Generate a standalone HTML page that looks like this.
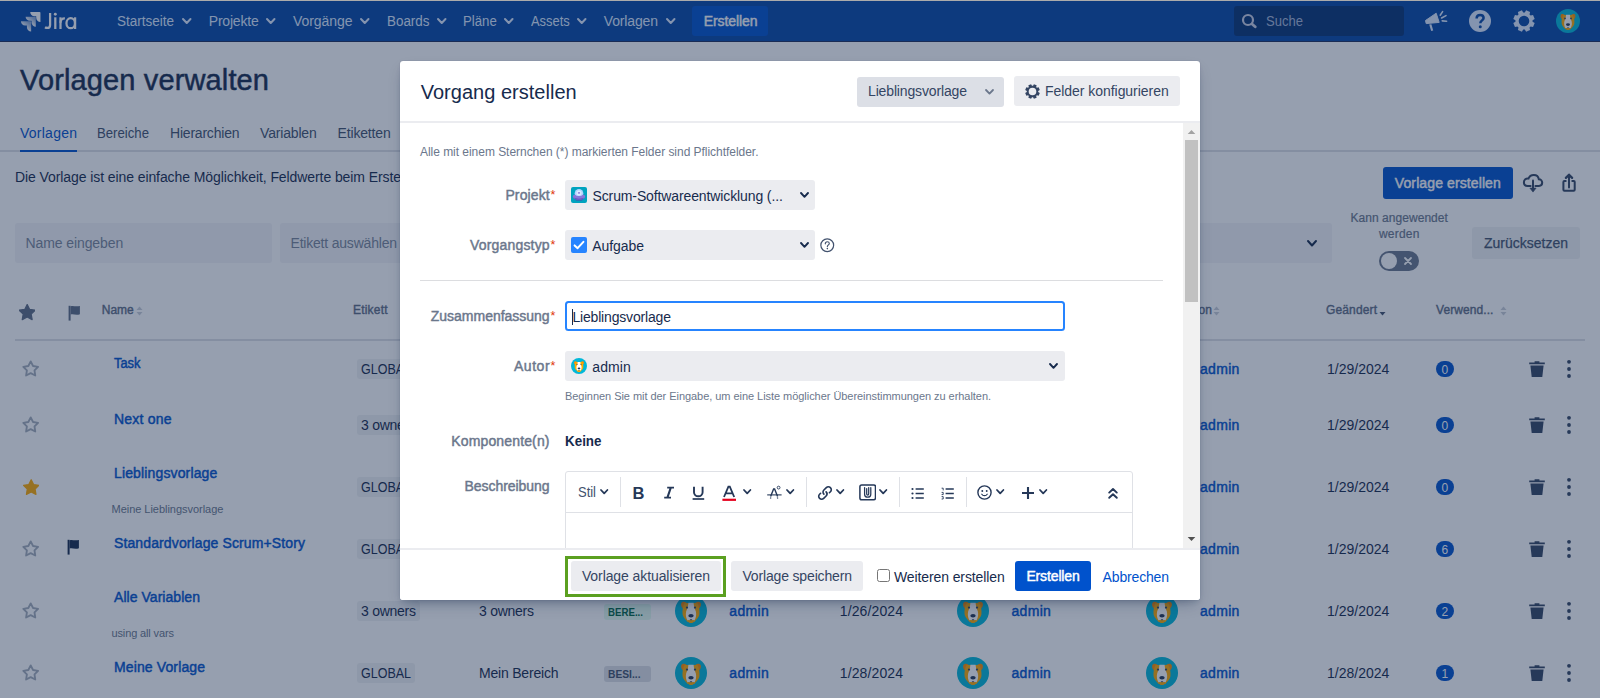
<!DOCTYPE html>
<html lang="de"><head><meta charset="utf-8"><title>Vorlagen verwalten - Jira</title>
<style>
html,body{margin:0;padding:0;}
body{width:1600px;height:698px;overflow:hidden;position:relative;background:#fff;font-family:"Liberation Sans", sans-serif;}
#pg,#bl,#md{position:absolute;left:0;top:0;width:1600px;height:698px;overflow:hidden;}
#pg div,#pg svg,#pg span,#md div,#md svg,#md span{position:absolute;display:block;box-sizing:border-box;}
.t{white-space:nowrap;}
#bl{background:rgba(23,43,77,0.45);}
</style></head>
<body>
<div id="pg">
<div style="left:0px;top:1px;width:1600px;height:40px;background:#0747A6;border-radius:0px;"></div>
<div style="left:0px;top:41px;width:1600px;height:1px;background:#1E2F5C;border-radius:0px;"></div>
<svg style="left:18.8px;top:9.75px;" width="23.4" height="23.4" viewBox="0 0 24 24"><defs><linearGradient id="jg" x1="0.9" y1="0.1" x2="0.4" y2="0.7"><stop offset="0.15" stop-color="#fff" stop-opacity="0.55"/><stop offset="1" stop-color="#fff"/></linearGradient></defs><path fill="#fff" d="M11.53 2c0 2.4 1.97 4.35 4.35 4.35h1.78v1.7c0 2.4 1.94 4.34 4.34 4.35V2.84a.84.84 0 0 0-.84-.84h-9.63z"/><path fill="url(#jg)" d="M6.77 6.8a4.362 4.362 0 0 0 4.34 4.34h1.8v1.72a4.362 4.362 0 0 0 4.34 4.34V7.63a.841.841 0 0 0-.83-.83H6.77z"/><path fill="url(#jg)" d="M2 11.6c0 2.4 1.95 4.34 4.35 4.34h1.78v1.72c.01 2.39 1.95 4.33 4.34 4.34v-9.57a.84.84 0 0 0-.84-.84L2 11.6z"/></svg>
<svg style="left:43px;top:11px;" width="36" height="21" viewBox="43 11 36 21"><g fill="none" stroke="#fff" stroke-width="2.25"><path d="M50.1 13.1 V24.9 C50.1 27.1 48.7 27.95 47.2 27.95 C46.4 27.95 45.6 27.7 45 27.3"/><path d="M55.3 17.3 V29"/><path d="M60.5 17.3 V29"/><path d="M60.5 22.8 C60.5 19.9 62.2 18.35 64.9 18.45"/><ellipse cx="70.7" cy="23.15" rx="4.25" ry="5"/><path d="M75.1 17.3 V29"/></g><circle cx="55.3" cy="14.2" r="1.45" fill="#fff"/></svg>
<span class="t" style="left:117.00px;top:14.15px;font-size:14px;line-height:14px;color:#DEEBFF;transform:scaleX(0.9638);transform-origin:0 50%;">Startseite</span>
<svg style="left:181.25px;top:17.3px;" width="11.5" height="8" viewBox="0 0 11.5 8"><path d="M2 2 L5.75 6 L9.5 2" fill="none" stroke="#DEEBFF" stroke-width="2" stroke-linecap="round" stroke-linejoin="round"/></svg>
<span class="t" style="left:208.75px;top:14.15px;font-size:14px;line-height:14px;color:#DEEBFF;letter-spacing:-0.194px;">Projekte</span>
<svg style="left:265.25px;top:17.3px;" width="11.5" height="8" viewBox="0 0 11.5 8"><path d="M2 2 L5.75 6 L9.5 2" fill="none" stroke="#DEEBFF" stroke-width="2" stroke-linecap="round" stroke-linejoin="round"/></svg>
<span class="t" style="left:293.00px;top:14.15px;font-size:14px;line-height:14px;color:#DEEBFF;letter-spacing:-0.065px;">Vorgänge</span>
<svg style="left:359.25px;top:17.3px;" width="11.5" height="8" viewBox="0 0 11.5 8"><path d="M2 2 L5.75 6 L9.5 2" fill="none" stroke="#DEEBFF" stroke-width="2" stroke-linecap="round" stroke-linejoin="round"/></svg>
<span class="t" style="left:386.50px;top:14.15px;font-size:14px;line-height:14px;color:#DEEBFF;transform:scaleX(0.9581);transform-origin:0 50%;">Boards</span>
<svg style="left:436.0px;top:17.3px;" width="11.5" height="8" viewBox="0 0 11.5 8"><path d="M2 2 L5.75 6 L9.5 2" fill="none" stroke="#DEEBFF" stroke-width="2" stroke-linecap="round" stroke-linejoin="round"/></svg>
<span class="t" style="left:463.00px;top:14.15px;font-size:14px;line-height:14px;color:#DEEBFF;transform:scaleX(0.9424);transform-origin:0 50%;">Pläne</span>
<svg style="left:503.25px;top:17.3px;" width="11.5" height="8" viewBox="0 0 11.5 8"><path d="M2 2 L5.75 6 L9.5 2" fill="none" stroke="#DEEBFF" stroke-width="2" stroke-linecap="round" stroke-linejoin="round"/></svg>
<span class="t" style="left:530.75px;top:14.15px;font-size:14px;line-height:14px;color:#DEEBFF;transform:scaleX(0.9223);transform-origin:0 50%;">Assets</span>
<svg style="left:576.25px;top:17.3px;" width="11.5" height="8" viewBox="0 0 11.5 8"><path d="M2 2 L5.75 6 L9.5 2" fill="none" stroke="#DEEBFF" stroke-width="2" stroke-linecap="round" stroke-linejoin="round"/></svg>
<span class="t" style="left:603.75px;top:14.15px;font-size:14px;line-height:14px;color:#DEEBFF;letter-spacing:-0.147px;">Vorlagen</span>
<svg style="left:665.25px;top:17.3px;" width="11.5" height="8" viewBox="0 0 11.5 8"><path d="M2 2 L5.75 6 L9.5 2" fill="none" stroke="#DEEBFF" stroke-width="2" stroke-linecap="round" stroke-linejoin="round"/></svg>
<div style="left:692px;top:6px;width:76px;height:30px;background:#0052CC;border-radius:3px;"></div>
<span class="t" style="left:703.75px;top:14.15px;font-size:14px;line-height:14px;color:#FFFFFF;-webkit-text-stroke:0.45px #FFFFFF;letter-spacing:-0.090px;">Erstellen</span>
<div style="left:1234px;top:6px;width:170px;height:30px;background:rgba(9,30,66,0.48);border-radius:3px;"></div>
<svg style="left:1241px;top:13px;" width="16" height="16" viewBox="0 0 16 16"><circle cx="7" cy="7" r="5" fill="none" stroke="#CBD0E4" stroke-width="2.2"/><path d="M11 11 L14.2 13.8" stroke="#CBD0E4" stroke-width="2.8" stroke-linecap="round"/></svg>
<span class="t" style="left:1266.00px;top:14.45px;font-size:14px;line-height:14px;color:#A6B7D6;transform:scaleX(0.9319);transform-origin:0 50%;">Suche</span>
<svg style="left:1424px;top:10px;" width="24" height="22" viewBox="0 0 24 22"><path d="M1.5 10.5 L12.2 3.2 L15.2 12.4 L2.2 13.6Z" fill="#DEEBFF" stroke="#DEEBFF" stroke-width="1" stroke-linejoin="round"/><path d="M5.2 14.6 L7.4 14.2 L9.2 20.4 L7.2 20.9Z" fill="#DEEBFF"/><path d="M16.2 5.2 L18.6 1.6 M17.6 8 L22 5.6 M18.2 10.9 L22.6 11.3" stroke="#DEEBFF" stroke-width="1.6" stroke-linecap="round"/></svg>
<svg style="left:1469px;top:10px;" width="22" height="22" viewBox="0 0 22 22"><circle cx="11" cy="11" r="11" fill="#DEEBFF"/><path d="M7.6 8.6 C7.6 6.2 9.2 5 11.1 5 C13.1 5 14.6 6.2 14.6 8 C14.6 10.3 11.4 10.5 11.3 13.2" fill="none" stroke="#0747A6" stroke-width="2.5" stroke-linecap="butt"/><circle cx="11.25" cy="16.8" r="1.5" fill="#0747A6"/></svg>
<svg style="left:1513px;top:10px;" width="22" height="22" viewBox="0 0 22 22"><path fill-rule="evenodd" fill="#DEEBFF" d="M19.56 11.80 L21.70 13.09 L20.04 17.09 L17.62 16.49 L16.49 17.62 L17.09 20.04 L13.09 21.70 L11.80 19.56 L10.20 19.56 L8.91 21.70 L4.91 20.04 L5.51 17.62 L4.38 16.49 L1.96 17.09 L0.30 13.09 L2.44 11.80 L2.44 10.20 L0.30 8.91 L1.96 4.91 L4.38 5.51 L5.51 4.38 L4.91 1.96 L8.91 0.30 L10.20 2.44 L11.80 2.44 L13.09 0.30 L17.09 1.96 L16.49 4.38 L17.62 5.51 L20.04 4.91 L21.70 8.91 L19.56 10.20Z M16.3 11 A5.3 5.3 0 1 0 5.7 11 A5.3 5.3 0 1 0 16.3 11Z"/></svg>
<svg style="left:1556.0px;top:9.0px;" width="24" height="24" viewBox="0 0 32 32"><circle cx="16" cy="16" r="16" fill="#00B8D9"/>
<path d="M6.2 8.6 C6.6 6.6 9.2 6.2 11.2 7.4 L12.4 11.2 L8.2 13.4 C6.4 12.4 5.8 10.4 6.2 8.6Z" fill="#FF8B00"/>
<path d="M25.8 8.6 C25.4 6.6 22.8 6.2 20.8 7.4 L19.6 11.2 L23.8 13.4 C25.6 12.4 26.2 10.4 25.8 8.6Z" fill="#FF8B00"/>
<path d="M9.6 8 H22.4 C24.2 11 24.8 15.5 24.4 19.5 C24 22.5 21 24.6 19.4 27 H12.6 C11 24.6 8 22.5 7.6 19.5 C7.2 15.5 7.8 11 9.6 8Z" fill="#FFAB00"/>
<path d="M13.4 7.8 H18.6 C18.9 11 19.4 13.2 20.8 16.2 C21.6 19.4 21 22.6 19.6 25.2 H12.4 C11 22.6 10.4 19.4 11.2 16.2 C12.6 13.2 13.1 11 13.4 7.8Z" fill="#FFFFFF"/>
<path d="M12.8 25.2 H19.2 L18.2 27.4 C17 28.3 15 28.3 13.8 27.4Z" fill="#FFAB00"/>
<circle cx="12" cy="12.6" r="1.15" fill="#344563"/><circle cx="20" cy="12.6" r="1.15" fill="#344563"/>
<ellipse cx="16" cy="20.8" rx="2.7" ry="1.8" fill="#253858"/>
<path d="M14.6 24.2 H17.4 L16 25.6Z" fill="#253858"/></svg>
<span class="t" style="left:20.00px;top:66.05px;font-size:29px;line-height:29px;color:#172B4D;-webkit-text-stroke:0.49px #172B4D;letter-spacing:0.138px;">Vorlagen verwalten</span>
<span class="t" style="left:20.00px;top:125.65px;font-size:14px;line-height:14px;color:#0052CC;letter-spacing:0.246px;">Vorlagen</span>
<span class="t" style="left:97.00px;top:125.65px;font-size:14px;line-height:14px;color:#42526E;transform:scaleX(0.9409);transform-origin:0 50%;">Bereiche</span>
<span class="t" style="left:170.00px;top:125.65px;font-size:14px;line-height:14px;color:#42526E;letter-spacing:-0.209px;">Hierarchien</span>
<span class="t" style="left:260.00px;top:125.65px;font-size:14px;line-height:14px;color:#42526E;letter-spacing:-0.172px;">Variablen</span>
<span class="t" style="left:337.50px;top:125.65px;font-size:14px;line-height:14px;color:#42526E;letter-spacing:-0.154px;">Etiketten</span>
<div style="left:0px;top:150px;width:1600px;height:2px;background:#DFE1E6;border-radius:0px;"></div>
<div style="left:20px;top:149.5px;width:57px;height:2.5px;background:#0052CC;border-radius:0px;"></div>
<span class="t" style="left:15.00px;top:170.15px;font-size:14px;line-height:14px;color:#172B4D;letter-spacing:-0.087px;">Die Vorlage ist eine einfache Möglichkeit, Feldwerte beim Erste</span>
<div style="left:1383px;top:167px;width:130px;height:32px;background:#0052CC;border-radius:3px;"></div>
<span class="t" style="left:1394.80px;top:176.15px;font-size:14px;line-height:14px;color:#FFFFFF;-webkit-text-stroke:0.45px #FFFFFF;letter-spacing:0.106px;">Vorlage erstellen</span>
<svg style="left:1520px;top:170px;" width="26" height="24" viewBox="1520 170 26 24"><path d="M1530.6 185.9 H1527.6 C1525 185.9 1523.9 183.9 1523.9 182.2 C1523.9 179.7 1526 178 1528.5 178.5 C1529.3 176.2 1531.4 174.9 1533.8 174.9 C1536.6 174.9 1538.5 176.8 1538.8 179.2 C1541 179.2 1542.2 181 1542.2 182.6 C1542.2 184.6 1540.8 185.9 1539 185.9 H1535.4" fill="none" stroke="#344563" stroke-width="2" stroke-linecap="round"/><path d="M1533 180.6 V188.8" stroke="#344563" stroke-width="2" stroke-linecap="round"/><path d="M1529.9 188.1 H1536.1 L1533 192.1Z" fill="#344563" stroke="#344563" stroke-width="0.6" stroke-linejoin="round"/></svg>
<svg style="left:1558px;top:170px;" width="22" height="24" viewBox="1558 170 22 24"><path d="M1565.7 181 H1564.4 C1563.8 181 1563.4 181.4 1563.4 182 V189.8 C1563.4 190.4 1563.8 190.8 1564.4 190.8 H1573.7 C1574.3 190.8 1574.7 190.4 1574.7 189.8 V182 C1574.7 181.4 1574.3 181 1573.7 181 H1572.3" fill="none" stroke="#344563" stroke-width="2" stroke-linecap="round"/><path d="M1569 175.4 V187.4" stroke="#344563" stroke-width="2" stroke-linecap="round"/><path d="M1565.9 177.9 L1569 174.7 L1572.1 177.9" fill="none" stroke="#344563" stroke-width="2.3" stroke-linecap="round" stroke-linejoin="round"/></svg>
<div style="left:15px;top:223px;width:257px;height:40px;background:#F4F5F7;border-radius:3px;"></div>
<span class="t" style="left:25.50px;top:235.65px;font-size:14px;line-height:14px;color:#7A869A;letter-spacing:-0.097px;">Name eingeben</span>
<div style="left:280px;top:223px;width:257px;height:40px;background:#F4F5F7;border-radius:3px;"></div>
<span class="t" style="left:290.50px;top:235.65px;font-size:14px;line-height:14px;color:#7A869A;letter-spacing:-0.202px;">Etikett auswählen</span>
<div style="left:1075px;top:223px;width:257px;height:40px;background:#F4F5F7;border-radius:3px;"></div>
<svg style="left:1305.7px;top:239.05px;" width="12" height="8.5" viewBox="0 0 12 8.5"><path d="M2 2 L6.0 6.5 L10 2" fill="none" stroke="#172B4D" stroke-width="2" stroke-linecap="round" stroke-linejoin="round"/></svg>
<span class="t" style="left:1350.40px;top:212.34px;font-size:12px;line-height:12px;color:#6B778C;-webkit-text-stroke:0.20px #6B778C;letter-spacing:0.054px;">Kann angewendet</span>
<span class="t" style="left:1379.00px;top:228.34px;font-size:12px;line-height:12px;color:#6B778C;-webkit-text-stroke:0.20px #6B778C;letter-spacing:0.208px;">werden</span>
<div style="left:1379px;top:251px;width:40px;height:20px;background:#6B778C;border-radius:10px;"></div>
<div style="left:1381px;top:253px;width:16px;height:16px;background:#FFFFFF;border-radius:8px;"></div>
<svg style="left:1403px;top:256px;" width="10" height="10" viewBox="0 0 10 10"><path d="M2 2 L8 8 M8 2 L2 8" stroke="#fff" stroke-width="1.8" stroke-linecap="round"/></svg>
<div style="left:1472px;top:227px;width:108px;height:32px;background:rgba(9,30,66,0.06);border-radius:3px;"></div>
<span class="t" style="left:1483.70px;top:235.93px;font-size:14.5px;line-height:14.5px;color:#42526E;-webkit-text-stroke:0.25px #42526E;transform:scaleX(0.9650);transform-origin:0 50%;">Zurücksetzen</span>
<svg style="left:18.8px;top:304.4px;" width="16.4" height="16.4" viewBox="0 0 16 16"><path d="M8.00 0.40 L10.41 5.28 L15.80 6.07 L11.90 9.87 L12.82 15.23 L8.00 12.70 L3.18 15.23 L4.10 9.87 L0.20 6.07 L5.59 5.28Z" fill="#5E6C84" stroke="#5E6C84" stroke-width="1.2" stroke-linejoin="round"/></svg>
<svg style="left:67.5px;top:304.5px;" width="13" height="16" viewBox="0 0 13 16"><path d="M0.6 0.8 H2.6 V15.6 H0.6Z" fill="#5E6C84"/><path d="M2.6 1.4 C5 0.2 7.4 2.2 11.9 0.9 V9.2 C7.6 10.6 5 8.4 2.6 9.6Z" fill="#5E6C84"/></svg>
<span class="t" style="left:101.80px;top:303.54px;font-size:12px;line-height:12px;color:#5E6C84;-webkit-text-stroke:0.38px #5E6C84;letter-spacing:-0.039px;">Name</span>
<svg style="left:136px;top:305.5px;" width="7" height="10" viewBox="0 0 7 10"><path d="M3.5 0.5 L6.5 4 H0.5Z" fill="#C9CED8"/><path d="M3.5 9.5 L6.5 6 H0.5Z" fill="#C9CED8"/></svg>
<span class="t" style="left:353.00px;top:303.54px;font-size:12px;line-height:12px;color:#5E6C84;-webkit-text-stroke:0.38px #5E6C84;letter-spacing:0.190px;">Etikett</span>
<span class="t" style="left:1198.60px;top:303.54px;font-size:12px;line-height:12px;color:#5E6C84;-webkit-text-stroke:0.38px #5E6C84;">on</span>
<svg style="left:1213px;top:305.5px;" width="7" height="10" viewBox="0 0 7 10"><path d="M3.5 0.5 L6.5 4 H0.5Z" fill="#C9CED8"/><path d="M3.5 9.5 L6.5 6 H0.5Z" fill="#C9CED8"/></svg>
<span class="t" style="left:1326.00px;top:303.54px;font-size:12px;line-height:12px;color:#5E6C84;-webkit-text-stroke:0.38px #5E6C84;letter-spacing:0.136px;">Geändert</span>
<svg style="left:1379px;top:305.5px;" width="7" height="10" viewBox="0 0 7 10"><path d="M3.5 0.5 L6.5 4 H0.5Z" fill="transparent"/><path d="M3.5 9.5 L6.5 6 H0.5Z" fill="#42526E"/></svg>
<span class="t" style="left:1436.00px;top:303.54px;font-size:12px;line-height:12px;color:#5E6C84;-webkit-text-stroke:0.38px #5E6C84;letter-spacing:0.077px;">Verwend...</span>
<svg style="left:1500px;top:305.5px;" width="7" height="10" viewBox="0 0 7 10"><path d="M3.5 0.5 L6.5 4 H0.5Z" fill="#C9CED8"/><path d="M3.5 9.5 L6.5 6 H0.5Z" fill="#C9CED8"/></svg>
<div style="left:15px;top:339px;width:1570px;height:2px;background:#DFE1E6;border-radius:0px;"></div>
<svg style="left:22.3px;top:360.4px;" width="17.4" height="17.4" viewBox="0 0 17 17"><path d="M8.50 1.40 L10.79 5.84 L15.73 6.65 L12.21 10.21 L12.97 15.15 L8.50 12.90 L4.03 15.15 L4.79 10.21 L1.27 6.65 L6.21 5.84Z" fill="none" stroke="#A5ADBA" stroke-width="1.8" stroke-linejoin="round"/></svg>
<span class="t" style="left:114.00px;top:356.15px;font-size:14px;line-height:14px;color:#0052CC;-webkit-text-stroke:0.45px #0052CC;transform:scaleX(0.9202);transform-origin:0 50%;">Task</span>
<div style="left:357px;top:359.3px;width:57.80000000000001px;height:19.30000000000001px;background:rgba(9,30,66,0.06);border-radius:3px;"></div>
<span class="t" style="left:361.00px;top:361.75px;font-size:14px;line-height:14px;color:#172B4D;transform:scaleX(0.8924);transform-origin:0 50%;">GLOBAL</span>
<svg style="left:675.0px;top:353.0px;" width="32" height="32" viewBox="0 0 32 32"><circle cx="16" cy="16" r="16" fill="#00B8D9"/>
<path d="M6.2 8.6 C6.6 6.6 9.2 6.2 11.2 7.4 L12.4 11.2 L8.2 13.4 C6.4 12.4 5.8 10.4 6.2 8.6Z" fill="#FF8B00"/>
<path d="M25.8 8.6 C25.4 6.6 22.8 6.2 20.8 7.4 L19.6 11.2 L23.8 13.4 C25.6 12.4 26.2 10.4 25.8 8.6Z" fill="#FF8B00"/>
<path d="M9.6 8 H22.4 C24.2 11 24.8 15.5 24.4 19.5 C24 22.5 21 24.6 19.4 27 H12.6 C11 24.6 8 22.5 7.6 19.5 C7.2 15.5 7.8 11 9.6 8Z" fill="#FFAB00"/>
<path d="M13.4 7.8 H18.6 C18.9 11 19.4 13.2 20.8 16.2 C21.6 19.4 21 22.6 19.6 25.2 H12.4 C11 22.6 10.4 19.4 11.2 16.2 C12.6 13.2 13.1 11 13.4 7.8Z" fill="#FFFFFF"/>
<path d="M12.8 25.2 H19.2 L18.2 27.4 C17 28.3 15 28.3 13.8 27.4Z" fill="#FFAB00"/>
<circle cx="12" cy="12.6" r="1.15" fill="#344563"/><circle cx="20" cy="12.6" r="1.15" fill="#344563"/>
<ellipse cx="16" cy="20.8" rx="2.7" ry="1.8" fill="#253858"/>
<path d="M14.6 24.2 H17.4 L16 25.6Z" fill="#253858"/></svg>
<span class="t" style="left:729.30px;top:362.15px;font-size:14px;line-height:14px;color:#0052CC;-webkit-text-stroke:0.45px #0052CC;letter-spacing:0.315px;">admin</span>
<svg style="left:957.0px;top:353.0px;" width="32" height="32" viewBox="0 0 32 32"><circle cx="16" cy="16" r="16" fill="#00B8D9"/>
<path d="M6.2 8.6 C6.6 6.6 9.2 6.2 11.2 7.4 L12.4 11.2 L8.2 13.4 C6.4 12.4 5.8 10.4 6.2 8.6Z" fill="#FF8B00"/>
<path d="M25.8 8.6 C25.4 6.6 22.8 6.2 20.8 7.4 L19.6 11.2 L23.8 13.4 C25.6 12.4 26.2 10.4 25.8 8.6Z" fill="#FF8B00"/>
<path d="M9.6 8 H22.4 C24.2 11 24.8 15.5 24.4 19.5 C24 22.5 21 24.6 19.4 27 H12.6 C11 24.6 8 22.5 7.6 19.5 C7.2 15.5 7.8 11 9.6 8Z" fill="#FFAB00"/>
<path d="M13.4 7.8 H18.6 C18.9 11 19.4 13.2 20.8 16.2 C21.6 19.4 21 22.6 19.6 25.2 H12.4 C11 22.6 10.4 19.4 11.2 16.2 C12.6 13.2 13.1 11 13.4 7.8Z" fill="#FFFFFF"/>
<path d="M12.8 25.2 H19.2 L18.2 27.4 C17 28.3 15 28.3 13.8 27.4Z" fill="#FFAB00"/>
<circle cx="12" cy="12.6" r="1.15" fill="#344563"/><circle cx="20" cy="12.6" r="1.15" fill="#344563"/>
<ellipse cx="16" cy="20.8" rx="2.7" ry="1.8" fill="#253858"/>
<path d="M14.6 24.2 H17.4 L16 25.6Z" fill="#253858"/></svg>
<span class="t" style="left:1011.50px;top:362.15px;font-size:14px;line-height:14px;color:#0052CC;-webkit-text-stroke:0.45px #0052CC;letter-spacing:0.315px;">admin</span>
<svg style="left:1146.0px;top:353.0px;" width="32" height="32" viewBox="0 0 32 32"><circle cx="16" cy="16" r="16" fill="#00B8D9"/>
<path d="M6.2 8.6 C6.6 6.6 9.2 6.2 11.2 7.4 L12.4 11.2 L8.2 13.4 C6.4 12.4 5.8 10.4 6.2 8.6Z" fill="#FF8B00"/>
<path d="M25.8 8.6 C25.4 6.6 22.8 6.2 20.8 7.4 L19.6 11.2 L23.8 13.4 C25.6 12.4 26.2 10.4 25.8 8.6Z" fill="#FF8B00"/>
<path d="M9.6 8 H22.4 C24.2 11 24.8 15.5 24.4 19.5 C24 22.5 21 24.6 19.4 27 H12.6 C11 24.6 8 22.5 7.6 19.5 C7.2 15.5 7.8 11 9.6 8Z" fill="#FFAB00"/>
<path d="M13.4 7.8 H18.6 C18.9 11 19.4 13.2 20.8 16.2 C21.6 19.4 21 22.6 19.6 25.2 H12.4 C11 22.6 10.4 19.4 11.2 16.2 C12.6 13.2 13.1 11 13.4 7.8Z" fill="#FFFFFF"/>
<path d="M12.8 25.2 H19.2 L18.2 27.4 C17 28.3 15 28.3 13.8 27.4Z" fill="#FFAB00"/>
<circle cx="12" cy="12.6" r="1.15" fill="#344563"/><circle cx="20" cy="12.6" r="1.15" fill="#344563"/>
<ellipse cx="16" cy="20.8" rx="2.7" ry="1.8" fill="#253858"/>
<path d="M14.6 24.2 H17.4 L16 25.6Z" fill="#253858"/></svg>
<span class="t" style="left:1200.00px;top:362.15px;font-size:14px;line-height:14px;color:#0052CC;-webkit-text-stroke:0.45px #0052CC;letter-spacing:0.315px;">admin</span>
<span class="t" style="left:839.80px;top:362.15px;font-size:14px;line-height:14px;color:#172B4D;letter-spacing:0.113px;">1/29/2024</span>
<span class="t" style="left:1327.00px;top:362.15px;font-size:14px;line-height:14px;color:#172B4D;letter-spacing:0.013px;">1/29/2024</span>
<div style="left:1436px;top:361px;width:18px;height:16px;background:#0052CC;border-radius:8px;"></div>
<span class="t" style="left:1441.60px;top:363.54px;font-size:12px;line-height:12px;color:#FFFFFF;">0</span>
<svg style="left:1529px;top:361px;" width="16" height="16" viewBox="0 0 16 16"><path d="M5.6 0.3 H10.4 V1.5 H15.8 V3.2 H0.2 V1.5 H5.6Z M1.4 4.4 H14.6 L13.3 16 H2.7Z" fill="#344563"/></svg>
<svg style="left:1566px;top:359px;" width="6" height="20" viewBox="0 0 6 20"><circle cx="3" cy="2.8" r="1.9" fill="#344563"/><circle cx="3" cy="10" r="1.9" fill="#344563"/><circle cx="3" cy="17" r="1.9" fill="#344563"/></svg>
<svg style="left:22.3px;top:416.4px;" width="17.4" height="17.4" viewBox="0 0 17 17"><path d="M8.50 1.40 L10.79 5.84 L15.73 6.65 L12.21 10.21 L12.97 15.15 L8.50 12.90 L4.03 15.15 L4.79 10.21 L1.27 6.65 L6.21 5.84Z" fill="none" stroke="#A5ADBA" stroke-width="1.8" stroke-linejoin="round"/></svg>
<span class="t" style="left:114.00px;top:412.15px;font-size:14px;line-height:14px;color:#0052CC;-webkit-text-stroke:0.45px #0052CC;letter-spacing:0.208px;">Next one</span>
<div style="left:357px;top:415.3px;width:62.60000000000002px;height:19.30000000000001px;background:rgba(9,30,66,0.06);border-radius:3px;"></div>
<span class="t" style="left:361.00px;top:417.75px;font-size:14px;line-height:14px;color:#172B4D;letter-spacing:-0.259px;">3 owners</span>
<svg style="left:675.0px;top:409.0px;" width="32" height="32" viewBox="0 0 32 32"><circle cx="16" cy="16" r="16" fill="#00B8D9"/>
<path d="M6.2 8.6 C6.6 6.6 9.2 6.2 11.2 7.4 L12.4 11.2 L8.2 13.4 C6.4 12.4 5.8 10.4 6.2 8.6Z" fill="#FF8B00"/>
<path d="M25.8 8.6 C25.4 6.6 22.8 6.2 20.8 7.4 L19.6 11.2 L23.8 13.4 C25.6 12.4 26.2 10.4 25.8 8.6Z" fill="#FF8B00"/>
<path d="M9.6 8 H22.4 C24.2 11 24.8 15.5 24.4 19.5 C24 22.5 21 24.6 19.4 27 H12.6 C11 24.6 8 22.5 7.6 19.5 C7.2 15.5 7.8 11 9.6 8Z" fill="#FFAB00"/>
<path d="M13.4 7.8 H18.6 C18.9 11 19.4 13.2 20.8 16.2 C21.6 19.4 21 22.6 19.6 25.2 H12.4 C11 22.6 10.4 19.4 11.2 16.2 C12.6 13.2 13.1 11 13.4 7.8Z" fill="#FFFFFF"/>
<path d="M12.8 25.2 H19.2 L18.2 27.4 C17 28.3 15 28.3 13.8 27.4Z" fill="#FFAB00"/>
<circle cx="12" cy="12.6" r="1.15" fill="#344563"/><circle cx="20" cy="12.6" r="1.15" fill="#344563"/>
<ellipse cx="16" cy="20.8" rx="2.7" ry="1.8" fill="#253858"/>
<path d="M14.6 24.2 H17.4 L16 25.6Z" fill="#253858"/></svg>
<span class="t" style="left:729.30px;top:418.15px;font-size:14px;line-height:14px;color:#0052CC;-webkit-text-stroke:0.45px #0052CC;letter-spacing:0.315px;">admin</span>
<svg style="left:957.0px;top:409.0px;" width="32" height="32" viewBox="0 0 32 32"><circle cx="16" cy="16" r="16" fill="#00B8D9"/>
<path d="M6.2 8.6 C6.6 6.6 9.2 6.2 11.2 7.4 L12.4 11.2 L8.2 13.4 C6.4 12.4 5.8 10.4 6.2 8.6Z" fill="#FF8B00"/>
<path d="M25.8 8.6 C25.4 6.6 22.8 6.2 20.8 7.4 L19.6 11.2 L23.8 13.4 C25.6 12.4 26.2 10.4 25.8 8.6Z" fill="#FF8B00"/>
<path d="M9.6 8 H22.4 C24.2 11 24.8 15.5 24.4 19.5 C24 22.5 21 24.6 19.4 27 H12.6 C11 24.6 8 22.5 7.6 19.5 C7.2 15.5 7.8 11 9.6 8Z" fill="#FFAB00"/>
<path d="M13.4 7.8 H18.6 C18.9 11 19.4 13.2 20.8 16.2 C21.6 19.4 21 22.6 19.6 25.2 H12.4 C11 22.6 10.4 19.4 11.2 16.2 C12.6 13.2 13.1 11 13.4 7.8Z" fill="#FFFFFF"/>
<path d="M12.8 25.2 H19.2 L18.2 27.4 C17 28.3 15 28.3 13.8 27.4Z" fill="#FFAB00"/>
<circle cx="12" cy="12.6" r="1.15" fill="#344563"/><circle cx="20" cy="12.6" r="1.15" fill="#344563"/>
<ellipse cx="16" cy="20.8" rx="2.7" ry="1.8" fill="#253858"/>
<path d="M14.6 24.2 H17.4 L16 25.6Z" fill="#253858"/></svg>
<span class="t" style="left:1011.50px;top:418.15px;font-size:14px;line-height:14px;color:#0052CC;-webkit-text-stroke:0.45px #0052CC;letter-spacing:0.315px;">admin</span>
<svg style="left:1146.0px;top:409.0px;" width="32" height="32" viewBox="0 0 32 32"><circle cx="16" cy="16" r="16" fill="#00B8D9"/>
<path d="M6.2 8.6 C6.6 6.6 9.2 6.2 11.2 7.4 L12.4 11.2 L8.2 13.4 C6.4 12.4 5.8 10.4 6.2 8.6Z" fill="#FF8B00"/>
<path d="M25.8 8.6 C25.4 6.6 22.8 6.2 20.8 7.4 L19.6 11.2 L23.8 13.4 C25.6 12.4 26.2 10.4 25.8 8.6Z" fill="#FF8B00"/>
<path d="M9.6 8 H22.4 C24.2 11 24.8 15.5 24.4 19.5 C24 22.5 21 24.6 19.4 27 H12.6 C11 24.6 8 22.5 7.6 19.5 C7.2 15.5 7.8 11 9.6 8Z" fill="#FFAB00"/>
<path d="M13.4 7.8 H18.6 C18.9 11 19.4 13.2 20.8 16.2 C21.6 19.4 21 22.6 19.6 25.2 H12.4 C11 22.6 10.4 19.4 11.2 16.2 C12.6 13.2 13.1 11 13.4 7.8Z" fill="#FFFFFF"/>
<path d="M12.8 25.2 H19.2 L18.2 27.4 C17 28.3 15 28.3 13.8 27.4Z" fill="#FFAB00"/>
<circle cx="12" cy="12.6" r="1.15" fill="#344563"/><circle cx="20" cy="12.6" r="1.15" fill="#344563"/>
<ellipse cx="16" cy="20.8" rx="2.7" ry="1.8" fill="#253858"/>
<path d="M14.6 24.2 H17.4 L16 25.6Z" fill="#253858"/></svg>
<span class="t" style="left:1200.00px;top:418.15px;font-size:14px;line-height:14px;color:#0052CC;-webkit-text-stroke:0.45px #0052CC;letter-spacing:0.315px;">admin</span>
<span class="t" style="left:839.80px;top:418.15px;font-size:14px;line-height:14px;color:#172B4D;letter-spacing:0.113px;">1/29/2024</span>
<span class="t" style="left:1327.00px;top:418.15px;font-size:14px;line-height:14px;color:#172B4D;letter-spacing:0.013px;">1/29/2024</span>
<div style="left:1436px;top:417px;width:18px;height:16px;background:#0052CC;border-radius:8px;"></div>
<span class="t" style="left:1441.60px;top:419.54px;font-size:12px;line-height:12px;color:#FFFFFF;">0</span>
<svg style="left:1529px;top:417px;" width="16" height="16" viewBox="0 0 16 16"><path d="M5.6 0.3 H10.4 V1.5 H15.8 V3.2 H0.2 V1.5 H5.6Z M1.4 4.4 H14.6 L13.3 16 H2.7Z" fill="#344563"/></svg>
<svg style="left:1566px;top:415px;" width="6" height="20" viewBox="0 0 6 20"><circle cx="3" cy="2.8" r="1.9" fill="#344563"/><circle cx="3" cy="10" r="1.9" fill="#344563"/><circle cx="3" cy="17" r="1.9" fill="#344563"/></svg>
<svg style="left:22.8px;top:478.6px;" width="16.4" height="16.4" viewBox="0 0 16 16"><path d="M8.00 0.70 L10.35 5.36 L15.51 6.16 L11.80 9.84 L12.64 14.99 L8.00 12.60 L3.36 14.99 L4.20 9.84 L0.49 6.16 L5.65 5.36Z" fill="#FFAB00" stroke="#FFAB00" stroke-width="1.2" stroke-linejoin="round"/></svg>
<span class="t" style="left:114.00px;top:466.15px;font-size:14px;line-height:14px;color:#0052CC;-webkit-text-stroke:0.45px #0052CC;letter-spacing:0.141px;">Lieblingsvorlage</span>
<span class="t" style="left:111.50px;top:503.69px;font-size:11px;line-height:11px;color:#6B778C;letter-spacing:-0.029px;">Meine Lieblingsvorlage</span>
<div style="left:357px;top:477.3px;width:57.80000000000001px;height:19.30000000000001px;background:rgba(9,30,66,0.06);border-radius:3px;"></div>
<span class="t" style="left:361.00px;top:479.75px;font-size:14px;line-height:14px;color:#172B4D;transform:scaleX(0.8924);transform-origin:0 50%;">GLOBAL</span>
<svg style="left:675.0px;top:471.0px;" width="32" height="32" viewBox="0 0 32 32"><circle cx="16" cy="16" r="16" fill="#00B8D9"/>
<path d="M6.2 8.6 C6.6 6.6 9.2 6.2 11.2 7.4 L12.4 11.2 L8.2 13.4 C6.4 12.4 5.8 10.4 6.2 8.6Z" fill="#FF8B00"/>
<path d="M25.8 8.6 C25.4 6.6 22.8 6.2 20.8 7.4 L19.6 11.2 L23.8 13.4 C25.6 12.4 26.2 10.4 25.8 8.6Z" fill="#FF8B00"/>
<path d="M9.6 8 H22.4 C24.2 11 24.8 15.5 24.4 19.5 C24 22.5 21 24.6 19.4 27 H12.6 C11 24.6 8 22.5 7.6 19.5 C7.2 15.5 7.8 11 9.6 8Z" fill="#FFAB00"/>
<path d="M13.4 7.8 H18.6 C18.9 11 19.4 13.2 20.8 16.2 C21.6 19.4 21 22.6 19.6 25.2 H12.4 C11 22.6 10.4 19.4 11.2 16.2 C12.6 13.2 13.1 11 13.4 7.8Z" fill="#FFFFFF"/>
<path d="M12.8 25.2 H19.2 L18.2 27.4 C17 28.3 15 28.3 13.8 27.4Z" fill="#FFAB00"/>
<circle cx="12" cy="12.6" r="1.15" fill="#344563"/><circle cx="20" cy="12.6" r="1.15" fill="#344563"/>
<ellipse cx="16" cy="20.8" rx="2.7" ry="1.8" fill="#253858"/>
<path d="M14.6 24.2 H17.4 L16 25.6Z" fill="#253858"/></svg>
<span class="t" style="left:729.30px;top:480.15px;font-size:14px;line-height:14px;color:#0052CC;-webkit-text-stroke:0.45px #0052CC;letter-spacing:0.315px;">admin</span>
<svg style="left:957.0px;top:471.0px;" width="32" height="32" viewBox="0 0 32 32"><circle cx="16" cy="16" r="16" fill="#00B8D9"/>
<path d="M6.2 8.6 C6.6 6.6 9.2 6.2 11.2 7.4 L12.4 11.2 L8.2 13.4 C6.4 12.4 5.8 10.4 6.2 8.6Z" fill="#FF8B00"/>
<path d="M25.8 8.6 C25.4 6.6 22.8 6.2 20.8 7.4 L19.6 11.2 L23.8 13.4 C25.6 12.4 26.2 10.4 25.8 8.6Z" fill="#FF8B00"/>
<path d="M9.6 8 H22.4 C24.2 11 24.8 15.5 24.4 19.5 C24 22.5 21 24.6 19.4 27 H12.6 C11 24.6 8 22.5 7.6 19.5 C7.2 15.5 7.8 11 9.6 8Z" fill="#FFAB00"/>
<path d="M13.4 7.8 H18.6 C18.9 11 19.4 13.2 20.8 16.2 C21.6 19.4 21 22.6 19.6 25.2 H12.4 C11 22.6 10.4 19.4 11.2 16.2 C12.6 13.2 13.1 11 13.4 7.8Z" fill="#FFFFFF"/>
<path d="M12.8 25.2 H19.2 L18.2 27.4 C17 28.3 15 28.3 13.8 27.4Z" fill="#FFAB00"/>
<circle cx="12" cy="12.6" r="1.15" fill="#344563"/><circle cx="20" cy="12.6" r="1.15" fill="#344563"/>
<ellipse cx="16" cy="20.8" rx="2.7" ry="1.8" fill="#253858"/>
<path d="M14.6 24.2 H17.4 L16 25.6Z" fill="#253858"/></svg>
<span class="t" style="left:1011.50px;top:480.15px;font-size:14px;line-height:14px;color:#0052CC;-webkit-text-stroke:0.45px #0052CC;letter-spacing:0.315px;">admin</span>
<svg style="left:1146.0px;top:471.0px;" width="32" height="32" viewBox="0 0 32 32"><circle cx="16" cy="16" r="16" fill="#00B8D9"/>
<path d="M6.2 8.6 C6.6 6.6 9.2 6.2 11.2 7.4 L12.4 11.2 L8.2 13.4 C6.4 12.4 5.8 10.4 6.2 8.6Z" fill="#FF8B00"/>
<path d="M25.8 8.6 C25.4 6.6 22.8 6.2 20.8 7.4 L19.6 11.2 L23.8 13.4 C25.6 12.4 26.2 10.4 25.8 8.6Z" fill="#FF8B00"/>
<path d="M9.6 8 H22.4 C24.2 11 24.8 15.5 24.4 19.5 C24 22.5 21 24.6 19.4 27 H12.6 C11 24.6 8 22.5 7.6 19.5 C7.2 15.5 7.8 11 9.6 8Z" fill="#FFAB00"/>
<path d="M13.4 7.8 H18.6 C18.9 11 19.4 13.2 20.8 16.2 C21.6 19.4 21 22.6 19.6 25.2 H12.4 C11 22.6 10.4 19.4 11.2 16.2 C12.6 13.2 13.1 11 13.4 7.8Z" fill="#FFFFFF"/>
<path d="M12.8 25.2 H19.2 L18.2 27.4 C17 28.3 15 28.3 13.8 27.4Z" fill="#FFAB00"/>
<circle cx="12" cy="12.6" r="1.15" fill="#344563"/><circle cx="20" cy="12.6" r="1.15" fill="#344563"/>
<ellipse cx="16" cy="20.8" rx="2.7" ry="1.8" fill="#253858"/>
<path d="M14.6 24.2 H17.4 L16 25.6Z" fill="#253858"/></svg>
<span class="t" style="left:1200.00px;top:480.15px;font-size:14px;line-height:14px;color:#0052CC;-webkit-text-stroke:0.45px #0052CC;letter-spacing:0.315px;">admin</span>
<span class="t" style="left:839.80px;top:480.15px;font-size:14px;line-height:14px;color:#172B4D;letter-spacing:0.113px;">1/29/2024</span>
<span class="t" style="left:1327.00px;top:480.15px;font-size:14px;line-height:14px;color:#172B4D;letter-spacing:0.013px;">1/29/2024</span>
<div style="left:1436px;top:479px;width:18px;height:16px;background:#0052CC;border-radius:8px;"></div>
<span class="t" style="left:1441.60px;top:481.54px;font-size:12px;line-height:12px;color:#FFFFFF;">0</span>
<svg style="left:1529px;top:479px;" width="16" height="16" viewBox="0 0 16 16"><path d="M5.6 0.3 H10.4 V1.5 H15.8 V3.2 H0.2 V1.5 H5.6Z M1.4 4.4 H14.6 L13.3 16 H2.7Z" fill="#344563"/></svg>
<svg style="left:1566px;top:477px;" width="6" height="20" viewBox="0 0 6 20"><circle cx="3" cy="2.8" r="1.9" fill="#344563"/><circle cx="3" cy="10" r="1.9" fill="#344563"/><circle cx="3" cy="17" r="1.9" fill="#344563"/></svg>
<svg style="left:22.3px;top:540.4px;" width="17.4" height="17.4" viewBox="0 0 17 17"><path d="M8.50 1.40 L10.79 5.84 L15.73 6.65 L12.21 10.21 L12.97 15.15 L8.50 12.90 L4.03 15.15 L4.79 10.21 L1.27 6.65 L6.21 5.84Z" fill="none" stroke="#A5ADBA" stroke-width="1.8" stroke-linejoin="round"/></svg>
<svg style="left:67.3px;top:538.5px;" width="13" height="16" viewBox="0 0 13 16"><path d="M0.6 0.8 H2.6 V15.6 H0.6Z" fill="#172B4D"/><path d="M2.6 1.4 C5 0.2 7.4 2.2 11.9 0.9 V9.2 C7.6 10.6 5 8.4 2.6 9.6Z" fill="#172B4D"/></svg>
<span class="t" style="left:114.00px;top:536.15px;font-size:14px;line-height:14px;color:#0052CC;-webkit-text-stroke:0.45px #0052CC;letter-spacing:0.118px;">Standardvorlage Scrum+Story</span>
<div style="left:357px;top:539.3px;width:57.80000000000001px;height:19.300000000000068px;background:rgba(9,30,66,0.06);border-radius:3px;"></div>
<span class="t" style="left:361.00px;top:541.75px;font-size:14px;line-height:14px;color:#172B4D;transform:scaleX(0.8924);transform-origin:0 50%;">GLOBAL</span>
<svg style="left:675.0px;top:533.0px;" width="32" height="32" viewBox="0 0 32 32"><circle cx="16" cy="16" r="16" fill="#00B8D9"/>
<path d="M6.2 8.6 C6.6 6.6 9.2 6.2 11.2 7.4 L12.4 11.2 L8.2 13.4 C6.4 12.4 5.8 10.4 6.2 8.6Z" fill="#FF8B00"/>
<path d="M25.8 8.6 C25.4 6.6 22.8 6.2 20.8 7.4 L19.6 11.2 L23.8 13.4 C25.6 12.4 26.2 10.4 25.8 8.6Z" fill="#FF8B00"/>
<path d="M9.6 8 H22.4 C24.2 11 24.8 15.5 24.4 19.5 C24 22.5 21 24.6 19.4 27 H12.6 C11 24.6 8 22.5 7.6 19.5 C7.2 15.5 7.8 11 9.6 8Z" fill="#FFAB00"/>
<path d="M13.4 7.8 H18.6 C18.9 11 19.4 13.2 20.8 16.2 C21.6 19.4 21 22.6 19.6 25.2 H12.4 C11 22.6 10.4 19.4 11.2 16.2 C12.6 13.2 13.1 11 13.4 7.8Z" fill="#FFFFFF"/>
<path d="M12.8 25.2 H19.2 L18.2 27.4 C17 28.3 15 28.3 13.8 27.4Z" fill="#FFAB00"/>
<circle cx="12" cy="12.6" r="1.15" fill="#344563"/><circle cx="20" cy="12.6" r="1.15" fill="#344563"/>
<ellipse cx="16" cy="20.8" rx="2.7" ry="1.8" fill="#253858"/>
<path d="M14.6 24.2 H17.4 L16 25.6Z" fill="#253858"/></svg>
<span class="t" style="left:729.30px;top:542.15px;font-size:14px;line-height:14px;color:#0052CC;-webkit-text-stroke:0.45px #0052CC;letter-spacing:0.315px;">admin</span>
<svg style="left:957.0px;top:533.0px;" width="32" height="32" viewBox="0 0 32 32"><circle cx="16" cy="16" r="16" fill="#00B8D9"/>
<path d="M6.2 8.6 C6.6 6.6 9.2 6.2 11.2 7.4 L12.4 11.2 L8.2 13.4 C6.4 12.4 5.8 10.4 6.2 8.6Z" fill="#FF8B00"/>
<path d="M25.8 8.6 C25.4 6.6 22.8 6.2 20.8 7.4 L19.6 11.2 L23.8 13.4 C25.6 12.4 26.2 10.4 25.8 8.6Z" fill="#FF8B00"/>
<path d="M9.6 8 H22.4 C24.2 11 24.8 15.5 24.4 19.5 C24 22.5 21 24.6 19.4 27 H12.6 C11 24.6 8 22.5 7.6 19.5 C7.2 15.5 7.8 11 9.6 8Z" fill="#FFAB00"/>
<path d="M13.4 7.8 H18.6 C18.9 11 19.4 13.2 20.8 16.2 C21.6 19.4 21 22.6 19.6 25.2 H12.4 C11 22.6 10.4 19.4 11.2 16.2 C12.6 13.2 13.1 11 13.4 7.8Z" fill="#FFFFFF"/>
<path d="M12.8 25.2 H19.2 L18.2 27.4 C17 28.3 15 28.3 13.8 27.4Z" fill="#FFAB00"/>
<circle cx="12" cy="12.6" r="1.15" fill="#344563"/><circle cx="20" cy="12.6" r="1.15" fill="#344563"/>
<ellipse cx="16" cy="20.8" rx="2.7" ry="1.8" fill="#253858"/>
<path d="M14.6 24.2 H17.4 L16 25.6Z" fill="#253858"/></svg>
<span class="t" style="left:1011.50px;top:542.15px;font-size:14px;line-height:14px;color:#0052CC;-webkit-text-stroke:0.45px #0052CC;letter-spacing:0.315px;">admin</span>
<svg style="left:1146.0px;top:533.0px;" width="32" height="32" viewBox="0 0 32 32"><circle cx="16" cy="16" r="16" fill="#00B8D9"/>
<path d="M6.2 8.6 C6.6 6.6 9.2 6.2 11.2 7.4 L12.4 11.2 L8.2 13.4 C6.4 12.4 5.8 10.4 6.2 8.6Z" fill="#FF8B00"/>
<path d="M25.8 8.6 C25.4 6.6 22.8 6.2 20.8 7.4 L19.6 11.2 L23.8 13.4 C25.6 12.4 26.2 10.4 25.8 8.6Z" fill="#FF8B00"/>
<path d="M9.6 8 H22.4 C24.2 11 24.8 15.5 24.4 19.5 C24 22.5 21 24.6 19.4 27 H12.6 C11 24.6 8 22.5 7.6 19.5 C7.2 15.5 7.8 11 9.6 8Z" fill="#FFAB00"/>
<path d="M13.4 7.8 H18.6 C18.9 11 19.4 13.2 20.8 16.2 C21.6 19.4 21 22.6 19.6 25.2 H12.4 C11 22.6 10.4 19.4 11.2 16.2 C12.6 13.2 13.1 11 13.4 7.8Z" fill="#FFFFFF"/>
<path d="M12.8 25.2 H19.2 L18.2 27.4 C17 28.3 15 28.3 13.8 27.4Z" fill="#FFAB00"/>
<circle cx="12" cy="12.6" r="1.15" fill="#344563"/><circle cx="20" cy="12.6" r="1.15" fill="#344563"/>
<ellipse cx="16" cy="20.8" rx="2.7" ry="1.8" fill="#253858"/>
<path d="M14.6 24.2 H17.4 L16 25.6Z" fill="#253858"/></svg>
<span class="t" style="left:1200.00px;top:542.15px;font-size:14px;line-height:14px;color:#0052CC;-webkit-text-stroke:0.45px #0052CC;letter-spacing:0.315px;">admin</span>
<span class="t" style="left:839.80px;top:542.15px;font-size:14px;line-height:14px;color:#172B4D;letter-spacing:0.113px;">1/29/2024</span>
<span class="t" style="left:1327.00px;top:542.15px;font-size:14px;line-height:14px;color:#172B4D;letter-spacing:0.013px;">1/29/2024</span>
<div style="left:1436px;top:541px;width:18px;height:16px;background:#0052CC;border-radius:8px;"></div>
<span class="t" style="left:1441.60px;top:543.54px;font-size:12px;line-height:12px;color:#FFFFFF;">6</span>
<svg style="left:1529px;top:541px;" width="16" height="16" viewBox="0 0 16 16"><path d="M5.6 0.3 H10.4 V1.5 H15.8 V3.2 H0.2 V1.5 H5.6Z M1.4 4.4 H14.6 L13.3 16 H2.7Z" fill="#344563"/></svg>
<svg style="left:1566px;top:539px;" width="6" height="20" viewBox="0 0 6 20"><circle cx="3" cy="2.8" r="1.9" fill="#344563"/><circle cx="3" cy="10" r="1.9" fill="#344563"/><circle cx="3" cy="17" r="1.9" fill="#344563"/></svg>
<svg style="left:22.3px;top:602.4px;" width="17.4" height="17.4" viewBox="0 0 17 17"><path d="M8.50 1.40 L10.79 5.84 L15.73 6.65 L12.21 10.21 L12.97 15.15 L8.50 12.90 L4.03 15.15 L4.79 10.21 L1.27 6.65 L6.21 5.84Z" fill="none" stroke="#A5ADBA" stroke-width="1.8" stroke-linejoin="round"/></svg>
<span class="t" style="left:114.00px;top:590.15px;font-size:14px;line-height:14px;color:#0052CC;-webkit-text-stroke:0.45px #0052CC;letter-spacing:0.049px;">Alle Variablen</span>
<span class="t" style="left:111.50px;top:627.69px;font-size:11px;line-height:11px;color:#6B778C;letter-spacing:-0.131px;">using all vars</span>
<div style="left:357px;top:601.3px;width:62.60000000000002px;height:19.300000000000068px;background:rgba(9,30,66,0.06);border-radius:3px;"></div>
<span class="t" style="left:361.00px;top:603.75px;font-size:14px;line-height:14px;color:#172B4D;letter-spacing:-0.259px;">3 owners</span>
<span class="t" style="left:479.00px;top:604.15px;font-size:14px;line-height:14px;color:#172B4D;letter-spacing:-0.259px;">3 owners</span>
<div style="left:604px;top:604.4px;width:47px;height:15.200000000000045px;background:#E3FCEF;border-radius:3px;"></div>
<span class="t" style="left:608.30px;top:606.69px;font-size:11px;line-height:11px;color:#006644;font-weight:700;transform:scaleX(0.8808);transform-origin:0 50%;">BERE...</span>
<svg style="left:675.0px;top:595.0px;" width="32" height="32" viewBox="0 0 32 32"><circle cx="16" cy="16" r="16" fill="#00B8D9"/>
<path d="M6.2 8.6 C6.6 6.6 9.2 6.2 11.2 7.4 L12.4 11.2 L8.2 13.4 C6.4 12.4 5.8 10.4 6.2 8.6Z" fill="#FF8B00"/>
<path d="M25.8 8.6 C25.4 6.6 22.8 6.2 20.8 7.4 L19.6 11.2 L23.8 13.4 C25.6 12.4 26.2 10.4 25.8 8.6Z" fill="#FF8B00"/>
<path d="M9.6 8 H22.4 C24.2 11 24.8 15.5 24.4 19.5 C24 22.5 21 24.6 19.4 27 H12.6 C11 24.6 8 22.5 7.6 19.5 C7.2 15.5 7.8 11 9.6 8Z" fill="#FFAB00"/>
<path d="M13.4 7.8 H18.6 C18.9 11 19.4 13.2 20.8 16.2 C21.6 19.4 21 22.6 19.6 25.2 H12.4 C11 22.6 10.4 19.4 11.2 16.2 C12.6 13.2 13.1 11 13.4 7.8Z" fill="#FFFFFF"/>
<path d="M12.8 25.2 H19.2 L18.2 27.4 C17 28.3 15 28.3 13.8 27.4Z" fill="#FFAB00"/>
<circle cx="12" cy="12.6" r="1.15" fill="#344563"/><circle cx="20" cy="12.6" r="1.15" fill="#344563"/>
<ellipse cx="16" cy="20.8" rx="2.7" ry="1.8" fill="#253858"/>
<path d="M14.6 24.2 H17.4 L16 25.6Z" fill="#253858"/></svg>
<span class="t" style="left:729.30px;top:604.15px;font-size:14px;line-height:14px;color:#0052CC;-webkit-text-stroke:0.45px #0052CC;letter-spacing:0.315px;">admin</span>
<svg style="left:957.0px;top:595.0px;" width="32" height="32" viewBox="0 0 32 32"><circle cx="16" cy="16" r="16" fill="#00B8D9"/>
<path d="M6.2 8.6 C6.6 6.6 9.2 6.2 11.2 7.4 L12.4 11.2 L8.2 13.4 C6.4 12.4 5.8 10.4 6.2 8.6Z" fill="#FF8B00"/>
<path d="M25.8 8.6 C25.4 6.6 22.8 6.2 20.8 7.4 L19.6 11.2 L23.8 13.4 C25.6 12.4 26.2 10.4 25.8 8.6Z" fill="#FF8B00"/>
<path d="M9.6 8 H22.4 C24.2 11 24.8 15.5 24.4 19.5 C24 22.5 21 24.6 19.4 27 H12.6 C11 24.6 8 22.5 7.6 19.5 C7.2 15.5 7.8 11 9.6 8Z" fill="#FFAB00"/>
<path d="M13.4 7.8 H18.6 C18.9 11 19.4 13.2 20.8 16.2 C21.6 19.4 21 22.6 19.6 25.2 H12.4 C11 22.6 10.4 19.4 11.2 16.2 C12.6 13.2 13.1 11 13.4 7.8Z" fill="#FFFFFF"/>
<path d="M12.8 25.2 H19.2 L18.2 27.4 C17 28.3 15 28.3 13.8 27.4Z" fill="#FFAB00"/>
<circle cx="12" cy="12.6" r="1.15" fill="#344563"/><circle cx="20" cy="12.6" r="1.15" fill="#344563"/>
<ellipse cx="16" cy="20.8" rx="2.7" ry="1.8" fill="#253858"/>
<path d="M14.6 24.2 H17.4 L16 25.6Z" fill="#253858"/></svg>
<span class="t" style="left:1011.50px;top:604.15px;font-size:14px;line-height:14px;color:#0052CC;-webkit-text-stroke:0.45px #0052CC;letter-spacing:0.315px;">admin</span>
<svg style="left:1146.0px;top:595.0px;" width="32" height="32" viewBox="0 0 32 32"><circle cx="16" cy="16" r="16" fill="#00B8D9"/>
<path d="M6.2 8.6 C6.6 6.6 9.2 6.2 11.2 7.4 L12.4 11.2 L8.2 13.4 C6.4 12.4 5.8 10.4 6.2 8.6Z" fill="#FF8B00"/>
<path d="M25.8 8.6 C25.4 6.6 22.8 6.2 20.8 7.4 L19.6 11.2 L23.8 13.4 C25.6 12.4 26.2 10.4 25.8 8.6Z" fill="#FF8B00"/>
<path d="M9.6 8 H22.4 C24.2 11 24.8 15.5 24.4 19.5 C24 22.5 21 24.6 19.4 27 H12.6 C11 24.6 8 22.5 7.6 19.5 C7.2 15.5 7.8 11 9.6 8Z" fill="#FFAB00"/>
<path d="M13.4 7.8 H18.6 C18.9 11 19.4 13.2 20.8 16.2 C21.6 19.4 21 22.6 19.6 25.2 H12.4 C11 22.6 10.4 19.4 11.2 16.2 C12.6 13.2 13.1 11 13.4 7.8Z" fill="#FFFFFF"/>
<path d="M12.8 25.2 H19.2 L18.2 27.4 C17 28.3 15 28.3 13.8 27.4Z" fill="#FFAB00"/>
<circle cx="12" cy="12.6" r="1.15" fill="#344563"/><circle cx="20" cy="12.6" r="1.15" fill="#344563"/>
<ellipse cx="16" cy="20.8" rx="2.7" ry="1.8" fill="#253858"/>
<path d="M14.6 24.2 H17.4 L16 25.6Z" fill="#253858"/></svg>
<span class="t" style="left:1200.00px;top:604.15px;font-size:14px;line-height:14px;color:#0052CC;-webkit-text-stroke:0.45px #0052CC;letter-spacing:0.315px;">admin</span>
<span class="t" style="left:839.80px;top:604.15px;font-size:14px;line-height:14px;color:#172B4D;letter-spacing:0.113px;">1/26/2024</span>
<span class="t" style="left:1327.00px;top:604.15px;font-size:14px;line-height:14px;color:#172B4D;letter-spacing:0.013px;">1/29/2024</span>
<div style="left:1436px;top:603px;width:18px;height:16px;background:#0052CC;border-radius:8px;"></div>
<span class="t" style="left:1441.60px;top:605.54px;font-size:12px;line-height:12px;color:#FFFFFF;">2</span>
<svg style="left:1529px;top:603px;" width="16" height="16" viewBox="0 0 16 16"><path d="M5.6 0.3 H10.4 V1.5 H15.8 V3.2 H0.2 V1.5 H5.6Z M1.4 4.4 H14.6 L13.3 16 H2.7Z" fill="#344563"/></svg>
<svg style="left:1566px;top:601px;" width="6" height="20" viewBox="0 0 6 20"><circle cx="3" cy="2.8" r="1.9" fill="#344563"/><circle cx="3" cy="10" r="1.9" fill="#344563"/><circle cx="3" cy="17" r="1.9" fill="#344563"/></svg>
<svg style="left:22.3px;top:664.4px;" width="17.4" height="17.4" viewBox="0 0 17 17"><path d="M8.50 1.40 L10.79 5.84 L15.73 6.65 L12.21 10.21 L12.97 15.15 L8.50 12.90 L4.03 15.15 L4.79 10.21 L1.27 6.65 L6.21 5.84Z" fill="none" stroke="#A5ADBA" stroke-width="1.8" stroke-linejoin="round"/></svg>
<span class="t" style="left:114.00px;top:660.15px;font-size:14px;line-height:14px;color:#0052CC;-webkit-text-stroke:0.45px #0052CC;letter-spacing:0.124px;">Meine Vorlage</span>
<div style="left:357px;top:663.3px;width:57.80000000000001px;height:19.300000000000068px;background:rgba(9,30,66,0.06);border-radius:3px;"></div>
<span class="t" style="left:361.00px;top:665.75px;font-size:14px;line-height:14px;color:#172B4D;transform:scaleX(0.8924);transform-origin:0 50%;">GLOBAL</span>
<span class="t" style="left:479.00px;top:666.15px;font-size:14px;line-height:14px;color:#172B4D;letter-spacing:-0.200px;">Mein Bereich</span>
<div style="left:604px;top:666.4px;width:47px;height:15.200000000000045px;background:#DFE1E6;border-radius:3px;"></div>
<span class="t" style="left:608.30px;top:668.69px;font-size:11px;line-height:11px;color:#42526E;font-weight:700;transform:scaleX(0.9327);transform-origin:0 50%;">BESI...</span>
<svg style="left:675.0px;top:657.0px;" width="32" height="32" viewBox="0 0 32 32"><circle cx="16" cy="16" r="16" fill="#00B8D9"/>
<path d="M6.2 8.6 C6.6 6.6 9.2 6.2 11.2 7.4 L12.4 11.2 L8.2 13.4 C6.4 12.4 5.8 10.4 6.2 8.6Z" fill="#FF8B00"/>
<path d="M25.8 8.6 C25.4 6.6 22.8 6.2 20.8 7.4 L19.6 11.2 L23.8 13.4 C25.6 12.4 26.2 10.4 25.8 8.6Z" fill="#FF8B00"/>
<path d="M9.6 8 H22.4 C24.2 11 24.8 15.5 24.4 19.5 C24 22.5 21 24.6 19.4 27 H12.6 C11 24.6 8 22.5 7.6 19.5 C7.2 15.5 7.8 11 9.6 8Z" fill="#FFAB00"/>
<path d="M13.4 7.8 H18.6 C18.9 11 19.4 13.2 20.8 16.2 C21.6 19.4 21 22.6 19.6 25.2 H12.4 C11 22.6 10.4 19.4 11.2 16.2 C12.6 13.2 13.1 11 13.4 7.8Z" fill="#FFFFFF"/>
<path d="M12.8 25.2 H19.2 L18.2 27.4 C17 28.3 15 28.3 13.8 27.4Z" fill="#FFAB00"/>
<circle cx="12" cy="12.6" r="1.15" fill="#344563"/><circle cx="20" cy="12.6" r="1.15" fill="#344563"/>
<ellipse cx="16" cy="20.8" rx="2.7" ry="1.8" fill="#253858"/>
<path d="M14.6 24.2 H17.4 L16 25.6Z" fill="#253858"/></svg>
<span class="t" style="left:729.30px;top:666.15px;font-size:14px;line-height:14px;color:#0052CC;-webkit-text-stroke:0.45px #0052CC;letter-spacing:0.315px;">admin</span>
<svg style="left:957.0px;top:657.0px;" width="32" height="32" viewBox="0 0 32 32"><circle cx="16" cy="16" r="16" fill="#00B8D9"/>
<path d="M6.2 8.6 C6.6 6.6 9.2 6.2 11.2 7.4 L12.4 11.2 L8.2 13.4 C6.4 12.4 5.8 10.4 6.2 8.6Z" fill="#FF8B00"/>
<path d="M25.8 8.6 C25.4 6.6 22.8 6.2 20.8 7.4 L19.6 11.2 L23.8 13.4 C25.6 12.4 26.2 10.4 25.8 8.6Z" fill="#FF8B00"/>
<path d="M9.6 8 H22.4 C24.2 11 24.8 15.5 24.4 19.5 C24 22.5 21 24.6 19.4 27 H12.6 C11 24.6 8 22.5 7.6 19.5 C7.2 15.5 7.8 11 9.6 8Z" fill="#FFAB00"/>
<path d="M13.4 7.8 H18.6 C18.9 11 19.4 13.2 20.8 16.2 C21.6 19.4 21 22.6 19.6 25.2 H12.4 C11 22.6 10.4 19.4 11.2 16.2 C12.6 13.2 13.1 11 13.4 7.8Z" fill="#FFFFFF"/>
<path d="M12.8 25.2 H19.2 L18.2 27.4 C17 28.3 15 28.3 13.8 27.4Z" fill="#FFAB00"/>
<circle cx="12" cy="12.6" r="1.15" fill="#344563"/><circle cx="20" cy="12.6" r="1.15" fill="#344563"/>
<ellipse cx="16" cy="20.8" rx="2.7" ry="1.8" fill="#253858"/>
<path d="M14.6 24.2 H17.4 L16 25.6Z" fill="#253858"/></svg>
<span class="t" style="left:1011.50px;top:666.15px;font-size:14px;line-height:14px;color:#0052CC;-webkit-text-stroke:0.45px #0052CC;letter-spacing:0.315px;">admin</span>
<svg style="left:1146.0px;top:657.0px;" width="32" height="32" viewBox="0 0 32 32"><circle cx="16" cy="16" r="16" fill="#00B8D9"/>
<path d="M6.2 8.6 C6.6 6.6 9.2 6.2 11.2 7.4 L12.4 11.2 L8.2 13.4 C6.4 12.4 5.8 10.4 6.2 8.6Z" fill="#FF8B00"/>
<path d="M25.8 8.6 C25.4 6.6 22.8 6.2 20.8 7.4 L19.6 11.2 L23.8 13.4 C25.6 12.4 26.2 10.4 25.8 8.6Z" fill="#FF8B00"/>
<path d="M9.6 8 H22.4 C24.2 11 24.8 15.5 24.4 19.5 C24 22.5 21 24.6 19.4 27 H12.6 C11 24.6 8 22.5 7.6 19.5 C7.2 15.5 7.8 11 9.6 8Z" fill="#FFAB00"/>
<path d="M13.4 7.8 H18.6 C18.9 11 19.4 13.2 20.8 16.2 C21.6 19.4 21 22.6 19.6 25.2 H12.4 C11 22.6 10.4 19.4 11.2 16.2 C12.6 13.2 13.1 11 13.4 7.8Z" fill="#FFFFFF"/>
<path d="M12.8 25.2 H19.2 L18.2 27.4 C17 28.3 15 28.3 13.8 27.4Z" fill="#FFAB00"/>
<circle cx="12" cy="12.6" r="1.15" fill="#344563"/><circle cx="20" cy="12.6" r="1.15" fill="#344563"/>
<ellipse cx="16" cy="20.8" rx="2.7" ry="1.8" fill="#253858"/>
<path d="M14.6 24.2 H17.4 L16 25.6Z" fill="#253858"/></svg>
<span class="t" style="left:1200.00px;top:666.15px;font-size:14px;line-height:14px;color:#0052CC;-webkit-text-stroke:0.45px #0052CC;letter-spacing:0.315px;">admin</span>
<span class="t" style="left:839.80px;top:666.15px;font-size:14px;line-height:14px;color:#172B4D;letter-spacing:0.113px;">1/28/2024</span>
<span class="t" style="left:1327.00px;top:666.15px;font-size:14px;line-height:14px;color:#172B4D;letter-spacing:0.013px;">1/28/2024</span>
<div style="left:1436px;top:665px;width:18px;height:16px;background:#0052CC;border-radius:8px;"></div>
<span class="t" style="left:1441.60px;top:667.54px;font-size:12px;line-height:12px;color:#FFFFFF;">1</span>
<svg style="left:1529px;top:665px;" width="16" height="16" viewBox="0 0 16 16"><path d="M5.6 0.3 H10.4 V1.5 H15.8 V3.2 H0.2 V1.5 H5.6Z M1.4 4.4 H14.6 L13.3 16 H2.7Z" fill="#344563"/></svg>
<svg style="left:1566px;top:663px;" width="6" height="20" viewBox="0 0 6 20"><circle cx="3" cy="2.8" r="1.9" fill="#344563"/><circle cx="3" cy="10" r="1.9" fill="#344563"/><circle cx="3" cy="17" r="1.9" fill="#344563"/></svg>
</div>
<div id="bl"></div>
<div id="md">
<div style="left:0px;top:0px;width:1600px;height:1px;background:#ABABAB;border-radius:0px;"></div>
<div style="left:400px;top:61px;width:800px;height:539px;background:#FFFFFF;border-radius:3px;box-shadow:0 0 1px rgba(9,30,66,0.30),0 7px 14px -5px rgba(9,30,66,0.36),0 3px 5px -1px rgba(9,30,66,0.12);"></div>
<span class="t" style="left:420.70px;top:81.77px;font-size:20px;line-height:20px;color:#172B4D;letter-spacing:0.021px;">Vorgang erstellen</span>
<div style="left:857px;top:77px;width:147px;height:30px;background:#DCDFE6;border-radius:3px;"></div>
<span class="t" style="left:868.00px;top:84.15px;font-size:14px;line-height:14px;color:#344563;letter-spacing:-0.146px;">Lieblingsvorlage</span>
<svg style="left:984.2px;top:87.9px;" width="11" height="7.6" viewBox="0 0 11 7.6"><path d="M2 2 L5.5 5.6 L9 2" fill="none" stroke="#6B778C" stroke-width="1.8" stroke-linecap="round" stroke-linejoin="round"/></svg>
<div style="left:1014px;top:76px;width:166px;height:30px;background:#EBECF0;border-radius:3px;"></div>
<svg style="left:1025px;top:83.5px;" width="15" height="15" viewBox="0 0 22 22"><path fill-rule="evenodd" fill="#344563" d="M19.36 11.78 L21.70 13.09 L20.04 17.09 L17.46 16.36 L16.36 17.46 L17.09 20.04 L13.09 21.70 L11.78 19.36 L10.22 19.36 L8.91 21.70 L4.91 20.04 L5.64 17.46 L4.54 16.36 L1.96 17.09 L0.30 13.09 L2.64 11.78 L2.64 10.22 L0.30 8.91 L1.96 4.91 L4.54 5.64 L5.64 4.54 L4.91 1.96 L8.91 0.30 L10.22 2.64 L11.78 2.64 L13.09 0.30 L17.09 1.96 L16.36 4.54 L17.46 5.64 L20.04 4.91 L21.70 8.91 L19.36 10.22Z M16.6 11 A5.6 5.6 0 1 0 5.4 11 A5.6 5.6 0 1 0 16.6 11Z"/></svg>
<span class="t" style="left:1045.00px;top:84.15px;font-size:14px;line-height:14px;color:#344563;letter-spacing:-0.043px;">Felder konfigurieren</span>
<div style="left:400px;top:121px;width:800px;height:2px;background:#EBECF0;border-radius:0px;"></div>
<div style="left:1183px;top:123px;width:17px;height:425px;background:#F1F1F1;border-radius:0px;"></div>
<div style="left:1185px;top:140px;width:13px;height:162px;background:#C1C1C1;border-radius:0px;"></div>
<svg style="left:1187px;top:129px;" width="9" height="6" viewBox="0 0 9 6"><path d="M4.5 1 L8.3 5 H0.7Z" fill="#A3A3A3"/></svg>
<svg style="left:1187px;top:536px;" width="9" height="6" viewBox="0 0 9 6"><path d="M4.5 5 L8.3 1 H0.7Z" fill="#505050"/></svg>
<span class="t" style="left:420.00px;top:146.24px;font-size:12px;line-height:12px;color:#6B778C;letter-spacing:-0.036px;">Alle mit einem Sternchen (*) markierten Felder sind Pflichtfelder.</span>
<span class="t" style="left:505.40px;top:188.15px;font-size:14px;line-height:14px;color:#6B778C;-webkit-text-stroke:0.45px #6B778C;letter-spacing:0.120px;">Projekt</span>
<span class="t" style="left:550.60px;top:189.12px;font-size:12.5px;line-height:12.5px;color:#DE350B;">*</span>
<div style="left:565px;top:180px;width:250px;height:30px;background:#EBECF0;border-radius:3px;"></div>
<svg style="left:571px;top:187px;" width="16" height="16" viewBox="0 0 16 16"><rect width="16" height="16" rx="2" fill="#00A3BF"/><path d="M4.2 12.2 H11.8 L11 13.6 H5Z" fill="#5243AA"/><circle cx="8" cy="6.2" r="4.3" fill="#B3D4FF"/><circle cx="8" cy="5.9" r="2.5" fill="#DEEBFF"/><rect x="6.9" y="5" width="2.2" height="1.8" rx="0.5" fill="#8777D9" opacity="0.8"/><path d="M1.8 9.6 C1.8 8.2 3.4 7.4 4 7.4 C5.6 9.4 10.4 9.4 12 7.4 C12.6 7.4 14.2 8.2 14.2 9.6 C14.2 11.6 11.4 12.8 8 12.8 C4.6 12.8 1.8 11.6 1.8 9.6Z" fill="#8777D9"/><path d="M2.4 10.6 C3.6 12 5.6 12.8 8 12.8 C10.4 12.8 12.4 12 13.6 10.6 C12 11.4 10 11.7 8 11.7 C6 11.7 4 11.4 2.4 10.6Z" fill="#6554C0"/></svg>
<span class="t" style="left:592.50px;top:189.15px;font-size:14px;line-height:14px;color:#172B4D;letter-spacing:-0.118px;">Scrum-Softwareentwicklung (...</span>
<svg style="left:798.5px;top:191.4px;" width="11" height="7.8" viewBox="0 0 11 7.8"><path d="M2 2 L5.5 5.8 L9 2" fill="none" stroke="#172B4D" stroke-width="1.9" stroke-linecap="round" stroke-linejoin="round"/></svg>
<span class="t" style="left:470.00px;top:238.15px;font-size:14px;line-height:14px;color:#6B778C;-webkit-text-stroke:0.45px #6B778C;letter-spacing:0.176px;">Vorgangstyp</span>
<span class="t" style="left:550.60px;top:239.12px;font-size:12.5px;line-height:12.5px;color:#DE350B;">*</span>
<div style="left:565px;top:230px;width:250px;height:30px;background:#EBECF0;border-radius:3px;"></div>
<svg style="left:571px;top:237px;" width="16" height="16" viewBox="0 0 16 16"><rect width="16" height="16" rx="2" fill="#2684FF"/><path d="M3.6 8.4 L6.6 11.2 L12.4 4.8" fill="none" stroke="#fff" stroke-width="2" stroke-linecap="round" stroke-linejoin="round"/></svg>
<span class="t" style="left:592.30px;top:239.15px;font-size:14px;line-height:14px;color:#172B4D;letter-spacing:-0.079px;">Aufgabe</span>
<svg style="left:798.5px;top:241.29999999999998px;" width="11" height="7.8" viewBox="0 0 11 7.8"><path d="M2 2 L5.5 5.8 L9 2" fill="none" stroke="#172B4D" stroke-width="1.9" stroke-linecap="round" stroke-linejoin="round"/></svg>
<svg style="left:820px;top:238px;" width="14.5" height="14.5" viewBox="0 0 14.5 14.5"><circle cx="7.25" cy="7.25" r="6.4" fill="none" stroke="#42526E" stroke-width="1.2"/><path d="M5.3 5.8 C5.3 4.4 6.2 3.7 7.3 3.7 C8.5 3.7 9.3 4.4 9.3 5.4 C9.3 6.8 7.4 6.9 7.35 8.6" fill="none" stroke="#42526E" stroke-width="1.15" stroke-linecap="round"/><circle cx="7.35" cy="10.6" r="0.8" fill="#42526E"/></svg>
<div style="left:420px;top:280px;width:743px;height:1px;background:#DCDDE0;border-radius:0px;"></div>
<span class="t" style="left:430.80px;top:308.65px;font-size:14px;line-height:14px;color:#6B778C;-webkit-text-stroke:0.45px #6B778C;letter-spacing:-0.019px;">Zusammenfassung</span>
<span class="t" style="left:550.60px;top:309.62px;font-size:12.5px;line-height:12.5px;color:#DE350B;">*</span>
<div style="left:565px;top:301px;width:500px;height:30px;background:#FFFFFF;border-radius:3.5px;border:2px solid #2684FF;"></div>
<div style="left:571.5px;top:308.5px;width:1.0px;height:16.5px;background:#172B4D;border-radius:0px;"></div>
<span class="t" style="left:572.40px;top:309.95px;font-size:14px;line-height:14px;color:#172B4D;letter-spacing:-0.173px;">Lieblingsvorlage</span>
<span class="t" style="left:514.00px;top:358.95px;font-size:14px;line-height:14px;color:#6B778C;-webkit-text-stroke:0.45px #6B778C;letter-spacing:0.533px;">Autor</span>
<span class="t" style="left:550.60px;top:359.92px;font-size:12.5px;line-height:12.5px;color:#DE350B;">*</span>
<div style="left:565px;top:351px;width:500px;height:30px;background:#EBECF0;border-radius:3px;"></div>
<svg style="left:571.0px;top:358.0px;" width="16" height="16" viewBox="0 0 32 32"><circle cx="16" cy="16" r="16" fill="#00B8D9"/>
<path d="M6.2 8.6 C6.6 6.6 9.2 6.2 11.2 7.4 L12.4 11.2 L8.2 13.4 C6.4 12.4 5.8 10.4 6.2 8.6Z" fill="#FF8B00"/>
<path d="M25.8 8.6 C25.4 6.6 22.8 6.2 20.8 7.4 L19.6 11.2 L23.8 13.4 C25.6 12.4 26.2 10.4 25.8 8.6Z" fill="#FF8B00"/>
<path d="M9.6 8 H22.4 C24.2 11 24.8 15.5 24.4 19.5 C24 22.5 21 24.6 19.4 27 H12.6 C11 24.6 8 22.5 7.6 19.5 C7.2 15.5 7.8 11 9.6 8Z" fill="#FFAB00"/>
<path d="M13.4 7.8 H18.6 C18.9 11 19.4 13.2 20.8 16.2 C21.6 19.4 21 22.6 19.6 25.2 H12.4 C11 22.6 10.4 19.4 11.2 16.2 C12.6 13.2 13.1 11 13.4 7.8Z" fill="#FFFFFF"/>
<path d="M12.8 25.2 H19.2 L18.2 27.4 C17 28.3 15 28.3 13.8 27.4Z" fill="#FFAB00"/>
<circle cx="12" cy="12.6" r="1.15" fill="#344563"/><circle cx="20" cy="12.6" r="1.15" fill="#344563"/>
<ellipse cx="16" cy="20.8" rx="2.7" ry="1.8" fill="#253858"/>
<path d="M14.6 24.2 H17.4 L16 25.6Z" fill="#253858"/></svg>
<span class="t" style="left:592.30px;top:360.15px;font-size:14px;line-height:14px;color:#172B4D;letter-spacing:0.090px;">admin</span>
<svg style="left:1048.0px;top:362.40000000000003px;" width="11" height="7.8" viewBox="0 0 11 7.8"><path d="M2 2 L5.5 5.8 L9 2" fill="none" stroke="#172B4D" stroke-width="1.9" stroke-linecap="round" stroke-linejoin="round"/></svg>
<span class="t" style="left:565.00px;top:390.99px;font-size:11px;line-height:11px;color:#6B778C;letter-spacing:-0.046px;">Beginnen Sie mit der Eingabe, um eine Liste möglicher Übereinstimmungen zu erhalten.</span>
<span class="t" style="left:451.30px;top:433.75px;font-size:14px;line-height:14px;color:#6B778C;-webkit-text-stroke:0.45px #6B778C;letter-spacing:0.140px;">Komponente(n)</span>
<span class="t" style="left:565.00px;top:433.75px;font-size:14px;line-height:14px;color:#172B4D;font-weight:700;transform:scaleX(0.9574);transform-origin:0 50%;">Keine</span>
<span class="t" style="left:464.60px;top:479.45px;font-size:14px;line-height:14px;color:#6B778C;-webkit-text-stroke:0.45px #6B778C;letter-spacing:-0.066px;">Beschreibung</span>
<div style="left:565px;top:471px;width:568px;height:89px;background:#FFFFFF;border-radius:3px;border:1px solid #DFE1E6;"></div>
<div style="left:566px;top:512px;width:566px;height:1px;background:#DFE1E6;border-radius:0px;"></div>
<span class="t" style="left:578.00px;top:485.15px;font-size:14px;line-height:14px;color:#42526E;transform:scaleX(0.9253);transform-origin:0 50%;">Stil</span>
<svg style="left:599.1999999999999px;top:487.90000000000003px;" width="10.4" height="7.4" viewBox="0 0 10.4 7.4"><path d="M2 2 L5.2 5.4 L8.4 2" fill="none" stroke="#253858" stroke-width="1.8" stroke-linecap="round" stroke-linejoin="round"/></svg>
<div style="left:619.9px;top:477px;width:1.0px;height:29.5px;background:#DFE1E6;border-radius:0px;"></div>
<div style="left:806.1px;top:477px;width:1.0px;height:29.5px;background:#DFE1E6;border-radius:0px;"></div>
<div style="left:899.0px;top:477px;width:1.0px;height:29.5px;background:#DFE1E6;border-radius:0px;"></div>
<div style="left:966.2px;top:477px;width:1.0px;height:29.5px;background:#DFE1E6;border-radius:0px;"></div>
<span class="t" style="left:632.60px;top:484.63px;font-size:16.5px;line-height:16.5px;color:#253858;font-weight:700;">B</span>
<svg style="left:662px;top:485px;" width="14" height="15" viewBox="0 0 14 15"><path d="M5.2 1.8 H12 V3.6 H9.6 L6.8 11.8 H9 V13.6 H2.2 V11.8 H4.6 L7.4 3.6 H5.2Z" fill="#253858"/></svg>
<svg style="left:691px;top:485px;" width="15" height="16" viewBox="0 0 15 16"><path d="M3 1.8 V7.2 C3 12.6 11.6 12.6 11.6 7.2 V1.8" fill="none" stroke="#253858" stroke-width="1.9"/><path d="M1.6 14 H13.2" stroke="#253858" stroke-width="1.7"/></svg>
<svg style="left:721px;top:485px;" width="17" height="17" viewBox="0 0 17 17"><path d="M3 12 L7.4 1.6 H8.8 L13.2 12 M4.7 8.4 H11.5" fill="none" stroke="#253858" stroke-width="1.8" stroke-linejoin="miter"/><path d="M1.4 14.8 H15" stroke="#E5001C" stroke-width="2.2"/></svg>
<svg style="left:741.8px;top:487.90000000000003px;" width="10.4" height="7.4" viewBox="0 0 10.4 7.4"><path d="M2 2 L5.2 5.4 L8.4 2" fill="none" stroke="#253858" stroke-width="1.8" stroke-linecap="round" stroke-linejoin="round"/></svg>
<svg style="left:766px;top:484px;" width="18" height="17" viewBox="0 0 18 17"><path d="M4.6 12.4 L7.6 5 H8.6 L11.6 12.4" fill="none" stroke="#253858" stroke-width="1.4"/><path d="M1.2 10.9 H15.6" stroke="#253858" stroke-width="1.1"/><path d="M4.4 14.6 L4.9 13.4 M11.8 14.6 L11.3 13.4" stroke="#253858" stroke-width="1.3"/><circle cx="12.6" cy="3.6" r="1.4" fill="none" stroke="#253858" stroke-width="0.9"/></svg>
<svg style="left:785.0999999999999px;top:487.90000000000003px;" width="10.4" height="7.4" viewBox="0 0 10.4 7.4"><path d="M2 2 L5.2 5.4 L8.4 2" fill="none" stroke="#253858" stroke-width="1.8" stroke-linecap="round" stroke-linejoin="round"/></svg>
<svg style="left:816.5px;top:484.5px;" width="16" height="16" viewBox="0 0 16 16"><path d="M6.9 9.1 C5.7 7.9 5.7 6.2 6.9 5 L9.3 2.6 C10.5 1.4 12.2 1.4 13.4 2.6 C14.6 3.8 14.6 5.5 13.4 6.7 L12.4 7.7" fill="none" stroke="#253858" stroke-width="1.6" stroke-linecap="round"/><path d="M9.1 6.9 C10.3 8.1 10.3 9.8 9.1 11 L6.7 13.4 C5.5 14.6 3.8 14.6 2.6 13.4 C1.4 12.2 1.4 10.5 2.6 9.3 L3.6 8.3" fill="none" stroke="#253858" stroke-width="1.6" stroke-linecap="round"/></svg>
<svg style="left:834.8px;top:487.90000000000003px;" width="10.4" height="7.4" viewBox="0 0 10.4 7.4"><path d="M2 2 L5.2 5.4 L8.4 2" fill="none" stroke="#253858" stroke-width="1.8" stroke-linecap="round" stroke-linejoin="round"/></svg>
<svg style="left:859px;top:484.4px;" width="17.4" height="16.6" viewBox="0 0 17.4 16.6"><rect x="0.9" y="0.9" width="15.6" height="14.8" rx="1.8" fill="none" stroke="#253858" stroke-width="1.5"/><path d="M5.6 3.6 V10.2 C5.6 14.2 11.8 14.2 11.8 10.2 V3.6 M7.7 4.6 V10 C7.7 11.4 9.7 11.4 9.7 10 V3.6" fill="none" stroke="#253858" stroke-width="1.25" stroke-linecap="round"/></svg>
<svg style="left:878.0999999999999px;top:487.90000000000003px;" width="10.4" height="7.4" viewBox="0 0 10.4 7.4"><path d="M2 2 L5.2 5.4 L8.4 2" fill="none" stroke="#253858" stroke-width="1.8" stroke-linecap="round" stroke-linejoin="round"/></svg>
<svg style="left:911px;top:486.5px;" width="14" height="13" viewBox="0 0 14 13"><circle cx="1.5" cy="2" r="1.1" fill="#253858"/><circle cx="1.5" cy="6.5" r="1.1" fill="#253858"/><circle cx="1.5" cy="11" r="1.1" fill="#253858"/><path d="M4.6 2 H12.8 M4.6 6.5 H12.8 M4.6 11 H12.8" stroke="#253858" stroke-width="1.7"/></svg>
<svg style="left:941px;top:486.5px;" width="14" height="13" viewBox="0 0 14 13"><path d="M0.6 1.2 H2.2 V3.4 M0.6 5.4 H2.2 V7.6 H0.6 M0.6 9.6 H2.2 V12 H0.6" fill="none" stroke="#253858" stroke-width="0.9"/><path d="M4.6 2 H12.8 M4.6 6.5 H12.8 M4.6 11 H12.8" stroke="#253858" stroke-width="1.7"/></svg>
<svg style="left:977px;top:485.4px;" width="15" height="15" viewBox="0 0 15 15"><circle cx="7.5" cy="7.5" r="6.6" fill="none" stroke="#253858" stroke-width="1.4"/><circle cx="5.3" cy="6" r="0.95" fill="#253858"/><circle cx="9.7" cy="6" r="0.95" fill="#253858"/><path d="M4.8 9.2 C6 11.2 9 11.2 10.2 9.2" fill="none" stroke="#253858" stroke-width="1.2" stroke-linecap="round"/></svg>
<svg style="left:995.3px;top:487.90000000000003px;" width="10.4" height="7.4" viewBox="0 0 10.4 7.4"><path d="M2 2 L5.2 5.4 L8.4 2" fill="none" stroke="#253858" stroke-width="1.8" stroke-linecap="round" stroke-linejoin="round"/></svg>
<svg style="left:1021px;top:485.6px;" width="14" height="14" viewBox="0 0 14 14"><path d="M7 1 V13 M1 7 H13" stroke="#253858" stroke-width="2.1"/></svg>
<svg style="left:1037.8px;top:487.90000000000003px;" width="10.4" height="7.4" viewBox="0 0 10.4 7.4"><path d="M2 2 L5.2 5.4 L8.4 2" fill="none" stroke="#253858" stroke-width="1.8" stroke-linecap="round" stroke-linejoin="round"/></svg>
<svg style="left:1106.5px;top:486.8px;" width="12" height="13" viewBox="0 0 12 13"><path d="M2.2 5.6 L6 2 L9.8 5.6 M2.2 10.8 L6 7.2 L9.8 10.8" fill="none" stroke="#253858" stroke-width="1.9" stroke-linecap="round" stroke-linejoin="round"/></svg>
<div style="left:400px;top:548px;width:800px;height:52px;background:#FFFFFF;border-radius:0px;border-radius:0 0 3px 3px;border-top:2px solid #EBECF0;"></div>
<div style="left:565px;top:556px;width:161px;height:41px;background:transparent;border-radius:0px;border:3px solid #5BA020;"></div>
<div style="left:571px;top:561px;width:150px;height:30px;background:#EBECF0;border-radius:3px;"></div>
<span class="t" style="left:581.90px;top:569.05px;font-size:14px;line-height:14px;color:#344563;letter-spacing:-0.089px;">Vorlage aktualisieren</span>
<div style="left:731px;top:561px;width:132px;height:30px;background:#EBECF0;border-radius:3px;"></div>
<span class="t" style="left:742.40px;top:569.05px;font-size:14px;line-height:14px;color:#344563;letter-spacing:-0.155px;">Vorlage speichern</span>
<div style="left:877px;top:569px;width:13px;height:13px;background:#FFFFFF;border-radius:2.5px;border:1.3px solid #767676;"></div>
<span class="t" style="left:894.00px;top:569.65px;font-size:14px;line-height:14px;color:#172B4D;letter-spacing:-0.110px;">Weiteren erstellen</span>
<div style="left:1015px;top:561px;width:76px;height:30px;background:#0052CC;border-radius:3px;"></div>
<span class="t" style="left:1026.40px;top:568.55px;font-size:14px;line-height:14px;color:#FFFFFF;-webkit-text-stroke:0.45px #FFFFFF;letter-spacing:-0.134px;">Erstellen</span>
<span class="t" style="left:1102.60px;top:569.65px;font-size:14px;line-height:14px;color:#0052CC;letter-spacing:-0.165px;">Abbrechen</span>
</div>
</body></html>
